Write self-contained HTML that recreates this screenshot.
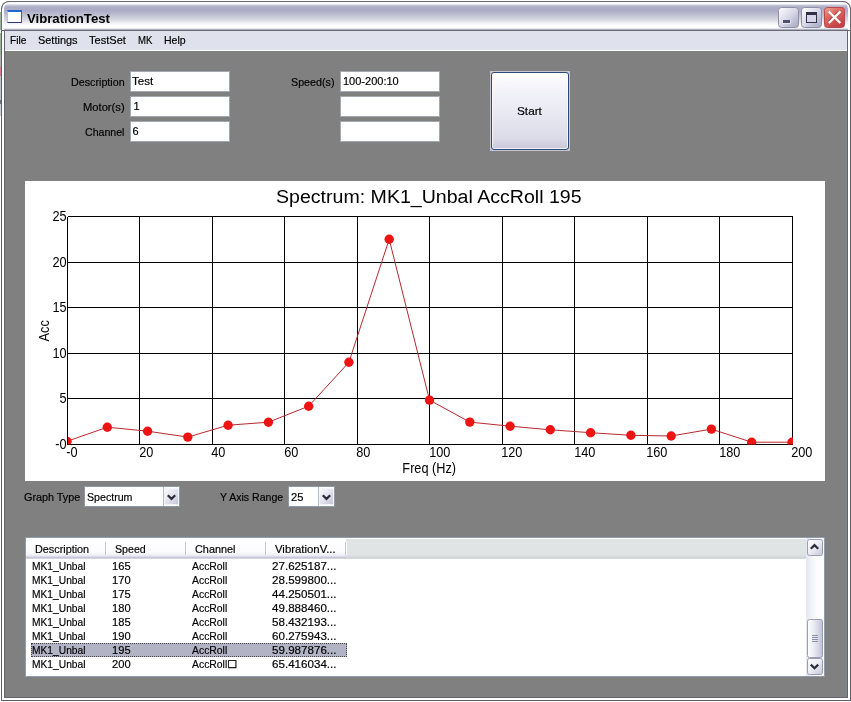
<!DOCTYPE html>
<html><head><meta charset="utf-8"><title>VibrationTest</title>
<style>
*{box-sizing:border-box;margin:0;padding:0}
html,body{width:851px;height:702px;overflow:hidden;background:#fff}
body{position:relative;font-family:"Liberation Sans",sans-serif;font-size:11px;color:#000;-webkit-text-stroke:0.18px #000}
.abs{position:absolute}
#win{will-change:transform;left:1px;top:1px;width:850px;height:700px;background:#808080;border-radius:8px 8px 0 0;overflow:hidden}
#title{z-index:3;left:0;top:0;width:850px;height:30px;border:1px solid #6a6a78;border-radius:8px 8px 0 0;box-shadow:inset 2px 0 0 #fbfbfd,inset -2px 0 0 #fbfbfd;background:linear-gradient(to bottom,#f0f0f6 0,#fff 1px,#fff 2px,#dcdce8 2.6px,#c4c4d6 3.4px,#adadc7 5px,#acacc6 8.5px,#b6b6cc 11px,#c8cad6 15px,#dcdde6 18.5px,#f0f0f4 21px,#fff 23.6px,#fff 26px,#e2e2ea 26.6px,#aaaaba 27.6px,#9a9aaa 28px) padding-box}
#ticon{z-index:4;left:6px;top:9px;width:15px;height:13px;background:#fdfeff;border:1px solid #3c5cb0;border-top:2px solid #1c68d0;border-bottom-color:#2a3a78;border-left-color:#a8c4f0}
#menu{left:4px;top:30px;width:842px;height:19px;background:#dfe1ec}
#menuline{left:4px;top:49px;width:842px;height:1px;background:#fff}
.frame{left:0;top:12px;width:850px;height:688px;box-shadow:inset 0 0 0 1px #5e5e6c,inset 0 0 0 3px #fff,inset 0 0 0 4px #64646f}
.br{left:844px;top:50px;width:2px;height:646px;background:#80808a}
.tb{background:#fff;border:1px solid #a3a9af;width:100px;height:21px}
.cap{width:21px;height:21px;top:6px;border-radius:3px;border:1px solid #8c8ca6}
#btn{left:489px;top:70px;width:80px;height:80px;background:#c4c7d0;}
#btn i{position:absolute;left:1px;top:1px;width:78px;height:78px;border:1px solid #2b4a78;border-radius:3px;box-shadow:inset 0 0 0 1px rgba(255,255,255,.75);background:linear-gradient(to bottom,#ffffff 0,#f4f4fa 20%,#e8e8f2 55%,#dcdce9 85%,#c8c8dc 100%)}
.combo{height:21px;background:#fff;border:1px solid #8e99a6}
.cbtn{top:0px;right:0px;width:16px;height:19px}
#list{left:24px;top:536px;width:800px;height:140px;background:#fff;border:1px solid #8f9cab}
.sel{background:#b2b4c6;outline:1px dotted #444;outline-offset:-1px}
.bx{font-family:"DejaVu Sans",sans-serif;font-size:10.4px;-webkit-text-stroke:0.35px #000;line-height:13px}
.sep{top:541px;width:1px;height:13px;background:#c4c4d0;box-shadow:1px 0 0 #fff}
</style></head><body>
<div class="abs" style="left:0;top:12px;width:1px;height:104px;background:linear-gradient(to bottom,#9ab49a 0,#9ab49a 18px,#e8ece8 18px,#e8ece8 21px,#9ab49a 21px,#9ab49a 43px,#b0b0b0 43px,#b0b0b0 55px,#d08088 55px,#d08088 64px,#c0c0cc 64px,#c0c0cc 88px,#707088 88px,#707088 92px,#d0d0dc 92px,#d0d0dc 104px)"></div>
<div id="win" class="abs">
 <div id="title" class="abs"></div>
 <div id="ticon" class="abs"></div>
 <span class="abs" style="left:25.7px;top:10px;font-size:13px;line-height:normal;white-space:nowrap;transform-origin:0 0;transform:scaleX(1.013);font-weight:bold;-webkit-text-stroke:0;z-index:4;">VibrationTest</span>
 <svg class="abs" style="left:776px;top:5px;z-index:4" width="70" height="24" viewBox="777 6 70 24">
 <defs>
  <linearGradient id="gb" x1="0" y1="0" x2="1" y2="1"><stop offset="0" stop-color="#ffffff"/><stop offset="0.45" stop-color="#dcdcea"/><stop offset="1" stop-color="#a4a4c0"/></linearGradient>
  <linearGradient id="gr" x1="0" y1="0" x2="0.6" y2="1"><stop offset="0" stop-color="#f0a896"/><stop offset="0.4" stop-color="#de6a62"/><stop offset="1" stop-color="#c44046"/></linearGradient>
 </defs>
 <rect x="778.5" y="7.5" width="20" height="20" rx="3" fill="url(#gb)" stroke="#8e90aa"/>
 <rect x="801.5" y="7.5" width="20" height="20" rx="3" fill="url(#gb)" stroke="#8e90aa"/>
 <rect x="824.5" y="7.5" width="20" height="20" rx="3" fill="url(#gr)" stroke="#b8484c"/>
 <rect x="782.5" y="20.5" width="8" height="3" fill="#fff"/>
 <rect x="783" y="20" width="7" height="3" fill="#505070"/>
 <rect x="806.5" y="13.5" width="10" height="9" fill="#d6d6e6" stroke="#30304a"/>
 <rect x="806" y="12" width="11" height="3" fill="#30304a"/>
 <path d="M829.6 12.2 L839.6 22.2 M839.6 12.2 L829.6 22.2" stroke="#7a2020" stroke-width="2.4" opacity="0.55" transform="translate(-0.7,-0.7)"/>
 <path d="M829.6 12.2 L839.6 22.2 M839.6 12.2 L829.6 22.2" stroke="#fff" stroke-width="2.3" stroke-linecap="square"/>
 </svg>
 <div id="menu" class="abs"></div><div id="menuline" class="abs"></div>
 <span class="abs" style="left:9.0px;top:33px;font-size:11px;line-height:normal;white-space:nowrap;transform-origin:0 0;transform:scaleX(0.925);">File</span>
 <span class="abs" style="left:37.2px;top:33px;font-size:11px;line-height:normal;white-space:nowrap;transform-origin:0 0;transform:scaleX(0.994);">Settings</span>
 <span class="abs" style="left:88.4px;top:33px;font-size:11px;line-height:normal;white-space:nowrap;transform-origin:0 0;transform:scaleX(1.006);">TestSet</span>
 <span class="abs" style="left:137.2px;top:33px;font-size:11px;line-height:normal;white-space:nowrap;transform-origin:0 0;transform:scaleX(0.869);">MK</span>
 <span class="abs" style="left:162.9px;top:33px;font-size:11px;line-height:normal;white-space:nowrap;transform-origin:0 0;transform:scaleX(0.957);">Help</span>

 <span class="abs" style="left:70.0px;top:75px;font-size:11px;line-height:normal;white-space:nowrap;transform-origin:0 0;transform:scaleX(0.975);">Description</span>
 <span class="abs" style="left:82.1px;top:100px;font-size:11px;line-height:normal;white-space:nowrap;transform-origin:0 0;transform:scaleX(1.016);">Motor(s)</span>
 <span class="abs" style="left:84.2px;top:125px;font-size:11px;line-height:normal;white-space:nowrap;transform-origin:0 0;transform:scaleX(0.963);">Channel</span>
 <div class="abs tb" style="left:129px;top:70px"></div>
 <div class="abs tb" style="left:129px;top:95px"></div>
 <div class="abs tb" style="left:129px;top:120px"></div>
 <span class="abs" style="left:131.4px;top:74px;font-size:11px;line-height:normal;white-space:nowrap;transform-origin:0 0;transform:scaleX(1.053);">Test</span>
 <span class="abs" style="left:132.4px;top:99px;font-size:11px;line-height:normal;white-space:nowrap;transform-origin:0 0;transform:scaleX(1);">1</span>
 <span class="abs" style="left:131.4px;top:124px;font-size:11px;line-height:normal;white-space:nowrap;transform-origin:0 0;transform:scaleX(1);">6</span>
 <span class="abs" style="left:290.0px;top:75px;font-size:11px;line-height:normal;white-space:nowrap;transform-origin:0 0;transform:scaleX(0.974);">Speed(s)</span>
 <div class="abs tb" style="left:339px;top:70px"></div>
 <div class="abs tb" style="left:339px;top:95px"></div>
 <div class="abs tb" style="left:339px;top:120px"></div>
 <span class="abs" style="left:341.9px;top:74px;font-size:11px;line-height:normal;white-space:nowrap;transform-origin:0 0;transform:scaleX(1.001);">100-200:10</span>
 <div id="btn" class="abs"><i></i></div>
 <span class="abs" style="left:516.1px;top:104px;font-size:11px;line-height:normal;white-space:nowrap;transform-origin:0 0;transform:scaleX(1.071);">Start</span>

 <svg class="abs" style="left:24px;top:180px" width="800" height="300" viewBox="25 181 800 300" shape-rendering="crispEdges">
<rect x="25" y="181" width="800" height="300" fill="#fff"/>
<line x1="67.5" y1="216.5" x2="67.5" y2="444.5" stroke="#000" stroke-width="1"/>
<line x1="139.5" y1="216.5" x2="139.5" y2="444.5" stroke="#000" stroke-width="1"/>
<line x1="212.5" y1="216.5" x2="212.5" y2="444.5" stroke="#000" stroke-width="1"/>
<line x1="284.5" y1="216.5" x2="284.5" y2="444.5" stroke="#000" stroke-width="1"/>
<line x1="357.5" y1="216.5" x2="357.5" y2="444.5" stroke="#000" stroke-width="1"/>
<line x1="429.5" y1="216.5" x2="429.5" y2="444.5" stroke="#000" stroke-width="1"/>
<line x1="502.5" y1="216.5" x2="502.5" y2="444.5" stroke="#000" stroke-width="1"/>
<line x1="574.5" y1="216.5" x2="574.5" y2="444.5" stroke="#000" stroke-width="1"/>
<line x1="647.5" y1="216.5" x2="647.5" y2="444.5" stroke="#000" stroke-width="1"/>
<line x1="719.5" y1="216.5" x2="719.5" y2="444.5" stroke="#000" stroke-width="1"/>
<line x1="792.5" y1="216.5" x2="792.5" y2="444.5" stroke="#000" stroke-width="1"/>
<line x1="67.5" y1="216.5" x2="792.5" y2="216.5" stroke="#000" stroke-width="1"/>
<line x1="67.5" y1="262.5" x2="792.5" y2="262.5" stroke="#000" stroke-width="1"/>
<line x1="67.5" y1="307.5" x2="792.5" y2="307.5" stroke="#000" stroke-width="1"/>
<line x1="67.5" y1="353.5" x2="792.5" y2="353.5" stroke="#000" stroke-width="1"/>
<line x1="67.5" y1="398.5" x2="792.5" y2="398.5" stroke="#000" stroke-width="1"/>
<line x1="67.5" y1="444.5" x2="792.5" y2="444.5" stroke="#000" stroke-width="1"/>
<clipPath id="pc"><rect x="68" y="217" width="725" height="227.5"/></clipPath>
<g clip-path="url(#pc)" shape-rendering="auto">
<polyline fill="none" stroke="#b8282e" stroke-width="1" points="67.0,441.3 107.3,427.2 147.6,431.2 187.8,437.1 228.1,425.2 268.4,422.2 308.7,406.2 348.9,362.3 389.2,239.2 429.5,400.1 469.8,422.1 510.1,426.2 550.3,429.8 590.6,432.7 630.9,435.3 671.2,436.0 711.4,429.1 751.7,442.2 792.0,442.2"/>
<circle cx="67.0" cy="441.3" r="4.7" fill="#ef1414"/>
<circle cx="107.3" cy="427.2" r="4.7" fill="#ef1414"/>
<circle cx="147.6" cy="431.2" r="4.7" fill="#ef1414"/>
<circle cx="187.8" cy="437.1" r="4.7" fill="#ef1414"/>
<circle cx="228.1" cy="425.2" r="4.7" fill="#ef1414"/>
<circle cx="268.4" cy="422.2" r="4.7" fill="#ef1414"/>
<circle cx="308.7" cy="406.2" r="4.7" fill="#ef1414"/>
<circle cx="348.9" cy="362.3" r="4.7" fill="#ef1414"/>
<circle cx="389.2" cy="239.2" r="4.7" fill="#ef1414"/>
<circle cx="429.5" cy="400.1" r="4.7" fill="#ef1414"/>
<circle cx="469.8" cy="422.1" r="4.7" fill="#ef1414"/>
<circle cx="510.1" cy="426.2" r="4.7" fill="#ef1414"/>
<circle cx="550.3" cy="429.8" r="4.7" fill="#ef1414"/>
<circle cx="590.6" cy="432.7" r="4.7" fill="#ef1414"/>
<circle cx="630.9" cy="435.3" r="4.7" fill="#ef1414"/>
<circle cx="671.2" cy="436.0" r="4.7" fill="#ef1414"/>
<circle cx="711.4" cy="429.1" r="4.7" fill="#ef1414"/>
<circle cx="751.7" cy="442.2" r="4.7" fill="#ef1414"/>
<circle cx="792.0" cy="442.2" r="4.7" fill="#ef1414"/>
</g>
<g font-family="Liberation Sans, sans-serif" fill="#000" shape-rendering="auto">
<text transform="translate(428.8,203.3) scale(1.02,1)" font-size="19.2" text-anchor="middle">Spectrum: MK1_Unbal AccRoll 195</text>
<text transform="translate(66.6,221.1) scale(0.915,1)" font-size="13.9" text-anchor="end">25</text>
<text transform="translate(66.6,267.1) scale(0.915,1)" font-size="13.9" text-anchor="end">20</text>
<text transform="translate(66.6,312.1) scale(0.915,1)" font-size="13.9" text-anchor="end">15</text>
<text transform="translate(66.6,358.1) scale(0.915,1)" font-size="13.9" text-anchor="end">10</text>
<text transform="translate(66.6,403.1) scale(0.915,1)" font-size="13.9" text-anchor="end">5</text>
<text transform="translate(66.6,449.1) scale(0.915,1)" font-size="13.9" text-anchor="end">-0</text>
<text transform="translate(66.2,457.1) scale(0.915,1)" font-size="13.9" text-anchor="start">-0</text>
<text transform="translate(139.2,457.1) scale(0.915,1)" font-size="13.9" text-anchor="start">20</text>
<text transform="translate(211.2,457.1) scale(0.915,1)" font-size="13.9" text-anchor="start">40</text>
<text transform="translate(284.2,457.1) scale(0.915,1)" font-size="13.9" text-anchor="start">60</text>
<text transform="translate(356.2,457.1) scale(0.915,1)" font-size="13.9" text-anchor="start">80</text>
<text transform="translate(429.2,457.1) scale(0.915,1)" font-size="13.9" text-anchor="start">100</text>
<text transform="translate(501.2,457.1) scale(0.915,1)" font-size="13.9" text-anchor="start">120</text>
<text transform="translate(574.2,457.1) scale(0.915,1)" font-size="13.9" text-anchor="start">140</text>
<text transform="translate(646.2,457.1) scale(0.915,1)" font-size="13.9" text-anchor="start">160</text>
<text transform="translate(719.2,457.1) scale(0.915,1)" font-size="13.9" text-anchor="start">180</text>
<text transform="translate(791.2,457.1) scale(0.915,1)" font-size="13.9" text-anchor="start">200</text>
<text transform="translate(429.2,472.8) scale(0.915,1)" font-size="13.9" text-anchor="middle">Freq (Hz)</text>
<text transform="translate(49.2,330.8) rotate(-90) scale(0.915,1)" font-size="13.9" text-anchor="middle">Acc</text>
</g></svg>

 <span class="abs" style="left:23.1px;top:490px;font-size:11px;line-height:normal;white-space:nowrap;transform-origin:0 0;transform:scaleX(0.983);">Graph Type</span>
 <div class="abs combo" style="left:83px;top:485px;width:96px"><svg class="abs cbtn" viewBox="0 0 16 19"><defs><linearGradient id="gc" x1="0" y1="0" x2="1" y2="1"><stop offset="0" stop-color="#fafafd"/><stop offset="0.5" stop-color="#e4e4ee"/><stop offset="1" stop-color="#c2c2d6"/></linearGradient></defs><rect x="0" y="0" width="1" height="19" fill="#b4bac6"/><rect x="1.5" y="1.5" width="14" height="16" rx="1" fill="url(#gc)" stroke="#f4f4fa"/><path d="M4.8 8.2 L8.5 11.9 L12.2 8.2" fill="none" stroke="#2c2c3c" stroke-width="2.2"/></svg></div>
 <span class="abs" style="left:86.2px;top:490px;font-size:11px;line-height:normal;white-space:nowrap;transform-origin:0 0;transform:scaleX(0.966);">Spectrum</span>
 <span class="abs" style="left:218.9px;top:490px;font-size:11px;line-height:normal;white-space:nowrap;transform-origin:0 0;transform:scaleX(0.959);">Y Axis Range</span>
 <div class="abs combo" style="left:287px;top:485px;width:47px"><svg class="abs cbtn" viewBox="0 0 16 19"><defs><linearGradient id="gc" x1="0" y1="0" x2="1" y2="1"><stop offset="0" stop-color="#fafafd"/><stop offset="0.5" stop-color="#e4e4ee"/><stop offset="1" stop-color="#c2c2d6"/></linearGradient></defs><rect x="0" y="0" width="1" height="19" fill="#b4bac6"/><rect x="1.5" y="1.5" width="14" height="16" rx="1" fill="url(#gc)" stroke="#f4f4fa"/><path d="M4.8 8.2 L8.5 11.9 L12.2 8.2" fill="none" stroke="#2c2c3c" stroke-width="2.2"/></svg></div>
 <span class="abs" style="left:289.9px;top:490px;font-size:11px;line-height:normal;white-space:nowrap;transform-origin:0 0;transform:scaleX(1.014);">25</span>

 <div id="list" class="abs"></div>
 <div class="abs" style="left:25px;top:537px;width:320px;height:21px;background:linear-gradient(to bottom,#fff 0,#fbfbfd 14px,#f0f0f6 17px,#dcdce8 18.5px,#c6c6d6 19.5px,#d6d6e2 20.5px,#e8e8f0 21px)"></div>
 <div class="abs" style="left:345px;top:538px;width:461px;height:20px;background:linear-gradient(to bottom,#e2e5e6 0,#e0e3e4 16px,#d2d5d8 18.5px,#d8dbde 20px)"></div>
 <span class="abs" style="left:33.6px;top:542px;font-size:11px;line-height:normal;white-space:nowrap;transform-origin:0 0;transform:scaleX(0.983);">Description</span>
 <span class="abs" style="left:114.0px;top:542px;font-size:11px;line-height:normal;white-space:nowrap;transform-origin:0 0;transform:scaleX(0.967);">Speed</span>
 <span class="abs" style="left:193.9px;top:542px;font-size:11px;line-height:normal;white-space:nowrap;transform-origin:0 0;transform:scaleX(0.988);">Channel</span>
 <span class="abs" style="left:274.1px;top:542px;font-size:11px;line-height:normal;white-space:nowrap;transform-origin:0 0;transform:scaleX(1.033);">VibrationV...</span>
 <div class="abs sep" style="left:104px"></div><div class="abs sep" style="left:184px"></div><div class="abs sep" style="left:264px"></div><div class="abs sep" style="left:344px"></div>
 <span class="abs" style="left:31.1px;top:559px;font-size:11px;line-height:normal;white-space:nowrap;transform-origin:0 0;transform:scaleX(0.931);">MK1_Unbal</span>
<span class="abs" style="left:111.4px;top:559px;font-size:11px;line-height:normal;white-space:nowrap;transform-origin:0 0;transform:scaleX(1.014);">165</span>
<span class="abs" style="left:190.8px;top:559px;font-size:11px;line-height:normal;white-space:nowrap;transform-origin:0 0;transform:scaleX(0.945);">AccRoll</span>
<span class="abs" style="left:271.0px;top:559px;font-size:11px;line-height:normal;white-space:nowrap;transform-origin:0 0;transform:scaleX(1.055);">27.625187...</span>
<span class="abs" style="left:31.1px;top:573px;font-size:11px;line-height:normal;white-space:nowrap;transform-origin:0 0;transform:scaleX(0.931);">MK1_Unbal</span>
<span class="abs" style="left:111.4px;top:573px;font-size:11px;line-height:normal;white-space:nowrap;transform-origin:0 0;transform:scaleX(1.014);">170</span>
<span class="abs" style="left:190.8px;top:573px;font-size:11px;line-height:normal;white-space:nowrap;transform-origin:0 0;transform:scaleX(0.945);">AccRoll</span>
<span class="abs" style="left:271.0px;top:573px;font-size:11px;line-height:normal;white-space:nowrap;transform-origin:0 0;transform:scaleX(1.055);">28.599800...</span>
<span class="abs" style="left:31.1px;top:587px;font-size:11px;line-height:normal;white-space:nowrap;transform-origin:0 0;transform:scaleX(0.931);">MK1_Unbal</span>
<span class="abs" style="left:111.4px;top:587px;font-size:11px;line-height:normal;white-space:nowrap;transform-origin:0 0;transform:scaleX(1.014);">175</span>
<span class="abs" style="left:190.8px;top:587px;font-size:11px;line-height:normal;white-space:nowrap;transform-origin:0 0;transform:scaleX(0.945);">AccRoll</span>
<span class="abs" style="left:271.0px;top:587px;font-size:11px;line-height:normal;white-space:nowrap;transform-origin:0 0;transform:scaleX(1.055);">44.250501...</span>
<span class="abs" style="left:31.1px;top:601px;font-size:11px;line-height:normal;white-space:nowrap;transform-origin:0 0;transform:scaleX(0.931);">MK1_Unbal</span>
<span class="abs" style="left:111.4px;top:601px;font-size:11px;line-height:normal;white-space:nowrap;transform-origin:0 0;transform:scaleX(1.014);">180</span>
<span class="abs" style="left:190.8px;top:601px;font-size:11px;line-height:normal;white-space:nowrap;transform-origin:0 0;transform:scaleX(0.945);">AccRoll</span>
<span class="abs" style="left:271.0px;top:601px;font-size:11px;line-height:normal;white-space:nowrap;transform-origin:0 0;transform:scaleX(1.055);">49.888460...</span>
<span class="abs" style="left:31.1px;top:615px;font-size:11px;line-height:normal;white-space:nowrap;transform-origin:0 0;transform:scaleX(0.931);">MK1_Unbal</span>
<span class="abs" style="left:111.4px;top:615px;font-size:11px;line-height:normal;white-space:nowrap;transform-origin:0 0;transform:scaleX(1.014);">185</span>
<span class="abs" style="left:190.8px;top:615px;font-size:11px;line-height:normal;white-space:nowrap;transform-origin:0 0;transform:scaleX(0.945);">AccRoll</span>
<span class="abs" style="left:271.0px;top:615px;font-size:11px;line-height:normal;white-space:nowrap;transform-origin:0 0;transform:scaleX(1.055);">58.432193...</span>
<span class="abs" style="left:31.1px;top:629px;font-size:11px;line-height:normal;white-space:nowrap;transform-origin:0 0;transform:scaleX(0.931);">MK1_Unbal</span>
<span class="abs" style="left:111.4px;top:629px;font-size:11px;line-height:normal;white-space:nowrap;transform-origin:0 0;transform:scaleX(1.014);">190</span>
<span class="abs" style="left:190.8px;top:629px;font-size:11px;line-height:normal;white-space:nowrap;transform-origin:0 0;transform:scaleX(0.945);">AccRoll</span>
<span class="abs" style="left:271.0px;top:629px;font-size:11px;line-height:normal;white-space:nowrap;transform-origin:0 0;transform:scaleX(1.055);">60.275943...</span>
<div class="abs sel" style="left:30px;top:642px;width:316px;height:14px"></div>
<span class="abs" style="left:31.1px;top:643px;font-size:11px;line-height:normal;white-space:nowrap;transform-origin:0 0;transform:scaleX(0.931);">MK1_Unbal</span>
<span class="abs" style="left:111.4px;top:643px;font-size:11px;line-height:normal;white-space:nowrap;transform-origin:0 0;transform:scaleX(1.014);">195</span>
<span class="abs" style="left:190.8px;top:643px;font-size:11px;line-height:normal;white-space:nowrap;transform-origin:0 0;transform:scaleX(0.945);">AccRoll</span>
<span class="abs" style="left:271.0px;top:643px;font-size:11px;line-height:normal;white-space:nowrap;transform-origin:0 0;transform:scaleX(1.055);">59.987876...</span>
<span class="abs" style="left:31.1px;top:657px;font-size:11px;line-height:normal;white-space:nowrap;transform-origin:0 0;transform:scaleX(0.931);">MK1_Unbal</span>
<span class="abs" style="left:111.4px;top:657px;font-size:11px;line-height:normal;white-space:nowrap;transform-origin:0 0;transform:scaleX(1.014);">200</span>
<span class="abs" style="left:190.8px;top:657px;font-size:11px;line-height:normal;white-space:nowrap;transform-origin:0 0;transform:scaleX(0.945);">AccRoll</span>
<span class="abs bx" style="left:226.3px;top:656.4px">&#9633;</span>
<span class="abs" style="left:271.0px;top:657px;font-size:11px;line-height:normal;white-space:nowrap;transform-origin:0 0;transform:scaleX(1.055);">65.416034...</span>
 <svg class="abs" style="left:805px;top:537px" width="18" height="138" viewBox="806 538 18 138">
 <defs>
  <linearGradient id="gt" x1="0" y1="0" x2="1" y2="0"><stop offset="0" stop-color="#e6e6f0"/><stop offset="0.5" stop-color="#fafafd"/><stop offset="1" stop-color="#ffffff"/></linearGradient>
  <linearGradient id="gth" x1="0" y1="0" x2="1" y2="0"><stop offset="0" stop-color="#ffffff"/><stop offset="0.5" stop-color="#e6e6f0"/><stop offset="1" stop-color="#c0c0d6"/></linearGradient>
  <linearGradient id="gsb" x1="0" y1="0" x2="1" y2="1"><stop offset="0" stop-color="#ffffff"/><stop offset="0.5" stop-color="#ebebf3"/><stop offset="1" stop-color="#c4c4d8"/></linearGradient>
 </defs>
 <rect x="806" y="538" width="18" height="138" fill="url(#gt)"/>
 <rect x="807.5" y="539.5" width="15" height="16" rx="2" fill="url(#gsb)" stroke="#9a9cb4"/>
 <rect x="807.5" y="658.5" width="15" height="16" rx="2" fill="url(#gsb)" stroke="#9a9cb4"/>
 <rect x="807.5" y="619.5" width="15" height="38" rx="2" fill="url(#gth)" stroke="#9a9cb4"/>
 <path d="M812 635.5h6M812 637.5h6M812 639.5h6M812 641.5h6" stroke="#8c92ac" stroke-width="1"/>
 <path d="M810.8 548.8 L814.5 545.1 L818.2 548.8" fill="none" stroke="#2c2c3c" stroke-width="2.2"/>
 <path d="M810.8 664.6 L814.5 668.3 L818.2 664.6" fill="none" stroke="#2c2c3c" stroke-width="2.2"/>
 </svg>
 <div class="abs br"></div><div class="abs frame"></div>
</div>
</body></html>
